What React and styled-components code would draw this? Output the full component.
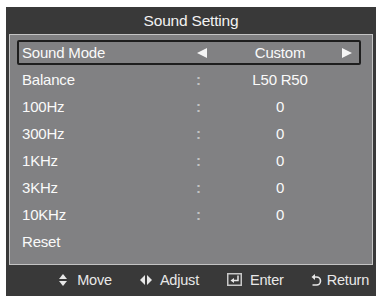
import React from 'react'
import styled, { createGlobalStyle } from 'styled-components'

const GlobalStyle = createGlobalStyle`
  body {
    margin: 0;
    background: #ffffff;
    font-family: "Liberation Sans", Arial, sans-serif;
  }
`

const Panel = styled.div`
  margin: 7px 0 0 6px;
  width: 370px;
  height: 289px;
  background: #393939;
  display: flex;
  flex-direction: column;
`

const Title = styled.div`
  height: 27px;
  display: flex;
  align-items: center;
  justify-content: center;
  color: #f2f2f2;
  font-size: 15.5px;
  letter-spacing: -0.2px;
  padding-top: 1px;
  box-sizing: border-box;
`

const Body = styled.div`
  margin: 0 3px;
  height: 231px;
  box-sizing: border-box;
  background: #818183;
  border: 1px solid #c4c4c4;
  padding: 4px 11px 0 7px;
  display: flex;
  flex-direction: column;
`

const Row = styled.div`
  height: ${p => (p.$active ? '25px' : '27px')};
  margin: ${p => (p.$active ? '1px 0' : '0')};
  box-sizing: border-box;
  border: 2px solid ${p => (p.$active ? '#1e1e1e' : 'transparent')};
  border-radius: 2px;
  padding-left: 3px;
  display: grid;
  grid-template-columns: 174px 13px 142px;
  align-items: center;
  color: #fafafa;
  font-size: 15px;
  letter-spacing: -0.2px;
`

const Label = styled.span`
  grid-column: 1;
  grid-row: 1;
`

const Colon = styled.span`
  grid-column: 2;
  grid-row: 1;
  color: #c2c2c2;
  font-weight: bold;
`

const Value = styled.span`
  grid-column: 3;
  grid-row: 1;
  justify-self: center;
`

const Arrow = styled.svg`
  grid-column: ${p => (p.$right ? 3 : 2)};
  grid-row: 1;
  justify-self: ${p => (p.$right ? 'end' : 'start')};
  margin-left: ${p => (p.$right ? '0' : '1px')};
  margin-right: ${p => (p.$right ? '-1px' : '0')};
`

const Footer = styled.div`
  flex: 1;
  display: flex;
  align-items: center;
  justify-content: flex-end;
  padding: 0 7px 2px 0;
  color: #e8e8e8;
  font-size: 14.5px;
  letter-spacing: -0.2px;
`

const Hint = styled.div`
  display: flex;
  align-items: center;
  gap: ${p => p.$gap}px;
  margin-left: ${p => p.$space}px;
`

const rows = [
  ['Balance', 'L50 R50'],
  ['100Hz', '0'],
  ['300Hz', '0'],
  ['1KHz', '0'],
  ['3KHz', '0'],
  ['10KHz', '0'],
]

function Tri ({ right }) {
  return (
    <Arrow $right={right} width="10" height="10" viewBox="0 0 10 10">
      <polygon points={right ? '0,0 10,5 0,10' : '10,0 0,5 10,10'} fill="#f5f5f5" />
    </Arrow>
  )
}

export default function App () {
  return (
    <>
      <GlobalStyle />
      <Panel>
        <Title>Sound Setting</Title>
        <Body>
          <Row $active>
            <Label>Sound Mode</Label>
            <Tri />
            <Value>Custom</Value>
            <Tri right />
          </Row>
          {rows.map(([name, val]) => (
            <Row key={name}>
              <Label>{name}</Label>
              <Colon>:</Colon>
              <Value>{val}</Value>
            </Row>
          ))}
          <Row>
            <Label>Reset</Label>
          </Row>
        </Body>
        <Footer>
          <Hint $gap={10} $space={0}>
            <svg width="8" height="12" viewBox="0 0 8 12">
              <polygon points="4,0 8,5 0,5" fill="#e8e8e8" />
              <polygon points="0,7 8,7 4,12" fill="#e8e8e8" />
            </svg>
            Move
          </Hint>
          <Hint $gap={8} $space={28}>
            <svg width="12" height="10" viewBox="0 0 12 10">
              <polygon points="5,0 5,10 0,5" fill="#e8e8e8" />
              <polygon points="7,0 12,5 7,10" fill="#e8e8e8" />
            </svg>
            Adjust
          </Hint>
          <Hint $gap={8} $space={28}>
            <svg width="15" height="13" viewBox="0 0 15 13">
              <rect x="0.75" y="0.75" width="13.5" height="11.5" fill="none" stroke="#c8c8c8" strokeWidth="1.5" />
              <path d="M11 2.5 V7.5 H6" fill="none" stroke="#e8e8e8" strokeWidth="1.5" />
              <polygon points="3.5,7.5 7,5 7,10" fill="#e8e8e8" />
            </svg>
            Enter
          </Hint>
          <Hint $gap={5} $space={27}>
            <svg width="11" height="12" viewBox="0 0 11 12">
              <path d="M3 3 H5.5 A4 4 0 0 1 5.5 11 H1.5" fill="none" stroke="#e8e8e8" strokeWidth="1.6" />
              <polygon points="0.5,3 4,0 4,6" fill="#e8e8e8" />
            </svg>
            Return
          </Hint>
        </Footer>
      </Panel>
    </>
  )
}
